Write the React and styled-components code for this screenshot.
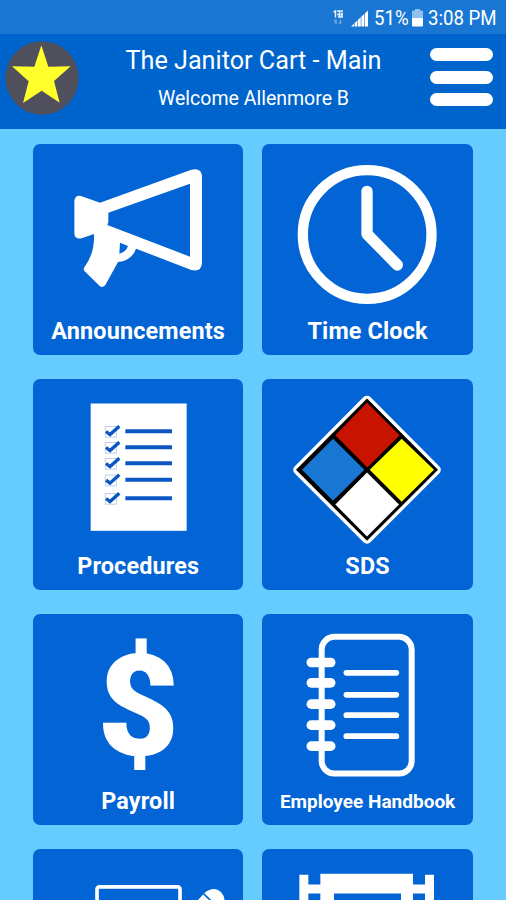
import React from 'react'
import styled, { createGlobalStyle } from 'styled-components'

const BLUE = '#0264d5'

export default () => (
  <Screen>
    <GlobalStyle />
    <StatusBar>
      <NetworkIcon />
      <SignalIcon />
      <StatusText width={33}>51%</StatusText>
      <BatteryIcon />
      <StatusText width={68}>3:08 PM</StatusText>
    </StatusBar>
    <Header>
      <Avatar />
      <Titles>
        <Title>The Janitor Cart - Main</Title>
        <Welcome>Welcome Allenmore B</Welcome>
      </Titles>
      <MenuButton aria-label="Menu">
        <MenuLine />
        <MenuLine />
        <MenuLine />
      </MenuButton>
    </Header>
    <Grid>
      {tiles.map(({ label, view, icon: Icon, small }) => (
        <Tile key={view}>
          <Drawing viewBox={`${view} 632 510`}>
            <Icon />
          </Drawing>
          {label && <Label $small={small}>{label}</Label>}
        </Tile>
      ))}
    </Grid>
  </Screen>
)

const NetworkIcon = () => (
  <svg width="13" height="18" viewBox="0 0 13 18">
    <g fill="none" stroke="#fff" strokeWidth="1.5" opacity="0.9">
      <path d="M0.5 3L2.5 2V8.5" />
      <path d="M4 2h6M6.5 2V8.5M9 3.5v5M4 5.5h6M5 8h5" />
    </g>
    <g fill="none" stroke="#fff" strokeWidth="1.6" opacity="0.35">
      <path d="M3 15v-4.5M1 12.5L3 11M7.5 10.5v4.5M6 13.5L7.5 15" />
    </g>
  </svg>
)

const SignalIcon = () => (
  <svg width="18" height="18" viewBox="0 0 18 18">
    <g fill="#fff">
      <path d="M0 17.5L3 14.8V17.5Z" />
      <path d="M3.6 13.9L6.4 11.3V17.5H3.6Z" />
      <path d="M7 10.7L9.8 8.2V17.5H7Z" />
      <path d="M10.4 7.6L13.2 5.1V17.5H10.4Z" />
      <path d="M13.8 4.4L17 1.5V17.5H13.8Z" />
    </g>
  </svg>
)

const BatteryIcon = () => (
  <svg width="11" height="18" viewBox="0 0 11 18">
    <path d="M0 2.5Q0 1.5 1 1.5H3V0H8V1.5H10Q11 1.5 11 2.5V9H0Z" fill="#8fc0ee" />
    <path d="M0 9H11V16.5Q11 17.5 10 17.5H1Q0 17.5 0 16.5Z" fill="#fff" />
  </svg>
)

const Avatar = () => (
  <svg width="74" height="74" viewBox="0 0 222 222">
    <circle cx="111" cy="111" r="110" fill="#50505d" />
    <path
      d="M109 13L130 77L197 76L147 120L164 185L110 149L54 186L71 121L21 76L88 77Z"
      fill="#ffff2c"
    />
  </svg>
)

const Megaphone = () => (
  <g fill="#fff" fillRule="evenodd">
    <path
      d="M153 168L210 188L484 89Q514 82 516 108V370Q514 397 484 390L318 326
        Q305 362 264 366L226 435Q217 445 209 438L164 394Q158 387 164 380
        Q194 340 192 282L155 295Q134 299 133 280V182Q136 164 153 168Z
        M235 218V246L232 255L480 350V131Z
        M270 308L294 318Q288 336 268 341Z"
    />
  </g>
)

const Clock = () => (
  <g fill="none" stroke="#fff">
    <circle cx="328.5" cy="283.5" r="193" strokeWidth="31" />
    <path d="M328 154V282L419 375" strokeWidth="34" strokeLinecap="round" strokeLinejoin="round" />
  </g>
)

const Checklist = () => (
  <>
    <rect x="182" y="87" width="288" height="382" fill="#fff" />
    {[170, 218, 266, 316, 371].map(y => (
      <g key={y} fill="none">
        <rect x="226" y={y - 14} width="33" height="32" stroke="#bdd0ee" strokeWidth="3" />
        <path d={`M228 ${y + 1}L240 ${y + 10}L268 ${y - 15}`} stroke="#0c57bd" strokeWidth="10" />
        <path d={`M286 ${y}H426`} stroke="#0c57c4" strokeWidth="12" />
      </g>
    ))}
  </>
)

const HazardDiamond = () => (
  <g strokeLinejoin="round">
    <path d="M328 78L535 286L328 493L121 286Z" fill="#000" stroke="#fff" strokeWidth="29" />
    <path d="M328 72L541 286L328 499L115 286Z" fill="#000" />
    <path d="M328 84L426 182L329 279L233 182Z" fill="#c81300" />
    <path d="M226 193L320 286L226 379L133 286Z" fill="#1976d2" />
    <path d="M432 193L529 286L432 382L336 286Z" fill="#ff0" />
    <path d="M328 294L424 390L328 486L233 390Z" fill="#fff" />
  </g>
)

const Dollar = () => (
  <DollarSign x="325" y="434" textAnchor="middle">
    $
  </DollarSign>
)

const Notebook = () => (
  <g fill="none" stroke="#fff" strokeLinecap="round">
    <rect x="192" y="79" width="270" height="410" rx="38" strokeWidth="18" />
    {[156, 217, 281, 344, 407].map(y => (
      <path key={y} d={`M161 ${y}H219`} strokeWidth="29" />
    ))}
    {[187, 253, 314, 377].map(y => (
      <path key={y} d={`M266 ${y}H416`} strokeWidth="17" />
    ))}
  </g>
)

const Board = () => (
  <>
    <rect x="201" y="139" width="249" height="180" rx="7" fill="none" stroke="#fff" strokeWidth="11" />
    <path d="M496 187L523 158Q552 134 574 156Q588 172 582 190L560 220L480 210Z" fill="#fff" />
    <path d="M521 160L549 187" stroke={BLUE} strokeWidth="5" />
  </>
)

const Banner = () => (
  <path
    d="M125 103H152V132H188V100H466V132H502V103H529V300H502V159H466V300H430V159H229V300H188V159H152V300H125Z"
    fill="#fff"
  />
)

// view is the top left corner of each drawing's own coordinate space
const tiles = [
  { label: 'Announcements', view: '9 12', icon: Megaphone },
  { label: 'Time Clock', view: '13 12', icon: Clock },
  { label: 'Procedures', view: '9 13.5', icon: Checklist },
  { label: 'SDS', view: '13 13.5', icon: HazardDiamond },
  { label: 'Payroll', view: '9 10.5', icon: Dollar },
  { label: 'Employee Handbook', view: '13 10.5', icon: Notebook, small: true },
  { view: '9 25.5', icon: Board },
  { view: '13 25.5', icon: Banner },
]

const GlobalStyle = createGlobalStyle`
  body {
    margin: 0;
    background: #66ccff;
  }
`
const Screen = styled.div`
  width: 506px;
  height: 900px;
  overflow: hidden;
  background: #66ccff;
  color: #fff;
  font-family: Roboto, sans-serif;
`
const StatusBar = styled.div`
  display: flex;
  align-items: center;
  justify-content: flex-end;
  gap: 5px;
  box-sizing: border-box;
  height: 34px;
  padding: 2px 10px 0 0;
  background: #1976d2;
`
const StatusText = styled.span`
  width: ${props => props.width}px;
  font-size: 20.5px;
  line-height: 22px;
  white-space: nowrap;
  transform: scaleX(0.91);
  transform-origin: left;
`
const Header = styled.header`
  display: flex;
  justify-content: space-between;
  box-sizing: border-box;
  height: 94.5px;
  padding: 7px 13px 0 5px;
  background: #0064cd;
`
const Titles = styled.div`
  padding-right: 2px;
  text-align: center;
  white-space: nowrap;
`
const Title = styled.h1`
  margin: 4.5px 0 0;
  font-size: 25.2px;
  font-weight: 400;
  line-height: 30px;
`
const Welcome = styled.p`
  margin: 11px 0 0;
  font-size: 19.5px;
  line-height: 24px;
`
const MenuButton = styled.button`
  display: flex;
  flex-direction: column;
  gap: 9.5px;
  width: 63px;
  padding: 7px 0 0;
  border: 0;
  background: none;
`
const MenuLine = styled.span`
  width: 63px;
  height: 13px;
  border-radius: 7px;
  background: #fff;
`
const Grid = styled.main`
  display: grid;
  grid-template-columns: repeat(2, 210.4px);
  grid-auto-rows: 210.5px;
  gap: 24.5px 19px;
  padding: 15.5px 33px 0;
`
const Tile = styled.section`
  display: flex;
  flex-direction: column;
  align-items: center;
  overflow: hidden;
  border-radius: 7px;
  background: ${BLUE};
`
const Drawing = styled.svg`
  width: 210.7px;
  height: 170px;
  flex: none;
  overflow: visible;
`
const Label = styled.h2`
  margin: ${props => (props.$small ? 5.5 : 4.5)}px 0 0;
  font-size: ${props => (props.$small ? 19 : 23.4)}px;
  font-weight: 700;
  line-height: 24px;
  letter-spacing: ${props => (props.$small ? 0 : 0.15)}px;
  white-space: nowrap;
`
const DollarSign = styled.text`
  font-family: Roboto, sans-serif;
  font-size: 425px;
  font-weight: 900;
  fill: #fff;
`
